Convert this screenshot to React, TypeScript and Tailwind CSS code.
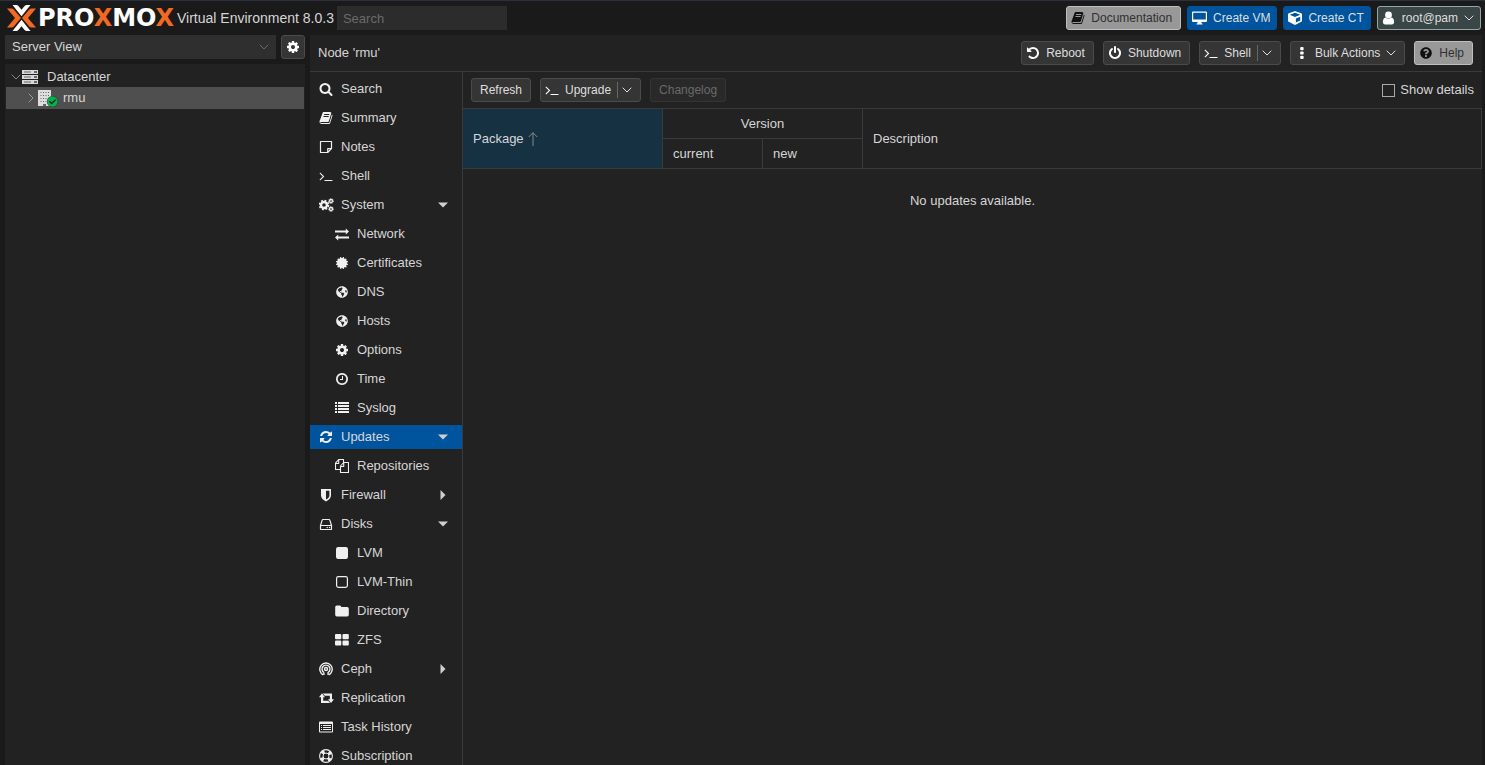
import type { ReactNode } from 'react';
import {
  FaCertificate,
  FaCheckCircle,
  FaCube,
  FaGlobeAmericas,
  FaQuestionCircle,
} from 'react-icons/fa';

const PATHS = {
  search:
    'M1216 832q0-185-131.5-316.5t-316.5-131.5-316.5 131.5-131.5 316.5 131.5 316.5 316.5 131.5 316.5-131.5 131.5-316.5zm512 832q0 52-38 90t-90 38q-54 0-90-38l-343-342q-179 124-399 124-143 0-273.5-55.5t-225-150-150-225-55.5-273.5 55.5-273.5 150-225 225-150 273.5-55.5 273.5 55.5 225 150 150 225 55.5 273.5q0 220-124 399l343 343q37 37 37 90z',
  book: 'M1703 478q40 57 18 129l-275 906q-19 64-76.5 107.5t-122.5 43.5h-923q-77 0-148.5-53.5t-99.5-131.5q-24-67-2-127 0-4 3-27t4-37q1-8-3-21.5t-3-19.5q2-11 8-21t16.5-23.5 16.5-23.5q23-38 45-91.5t30-91.5q3-10 .5-30t-.5-28q3-11 17-28t17-23q21-36 42-92t25-90q1-9-2.5-32t.5-28q4-13 22-30.5t22-22.5q19-26 42.5-84.5t27.5-96.5q1-8-3-25.5t-2-26.5q2-8 9-18t18-23 17-21q8-12 16.5-30.5t15-35 16-36 19.5-32 26.5-23.5 36-11.5 47.5 5.5l-1 3q38-9 51-9h761q74 0 114 56t18 130l-274 906q-36 119-71.5 153.5t-128.5 34.5h-869q-27 0-38 15-11 16-1 43 24 70 144 70h923q29 0 56-15.5t35-41.5l300-987q7-22 5-57 38 15 59 43zm-1064 2q-4 13 2 22.5t20 9.5h608q13 0 25.5-9.5t16.5-22.5l21-64q4-13-2-22.5t-20-9.5h-608q-13 0-25.5 9.5t-16.5 22.5zm-83 256q-4 13 2 22.5t20 9.5h608q13 0 25.5-9.5t16.5-22.5l21-64q4-13-2-22.5t-20-9.5h-608q-13 0-25.5 9.5t-16.5 22.5z',
  terminal:
    'M649 983l-466 466q-10 10-23 10t-23-10l-50-50q-10-10-10-23t10-23l393-393-393-393q-10-10-10-23t10-23l50-50q10-10 23-10t23 10l466 466q10 10 10 23t-10 23zm1079 457v64q0 14-9 23t-23 9h-960q-14 0-23-9t-9-23v-64q0-14 9-23t23-9h960q14 0 23 9t9 23z',
  refresh:
    'M1639 1056q0 5-1 7-64 268-268 434.5t-478 166.5q-146 0-282.5-55t-243.5-157l-129 129q-19 19-45 19t-45-19-19-45v-448q0-26 19-45t45-19h448q26 0 45 19t19 45-19 45l-137 137q71 66 161 102t187 36q134 0 250-65t186-179q11-17 53-117 8-23 30-23h192q13 0 22.5 9.5t9.5 22.5zm25-800v448q0 26-19 45t-45 19h-448q-26 0-45-19t-19-45 19-45l138-138q-148-137-349-137-134 0-250 65t-186 179q-11 17-53 117-8 23-30 23h-199q-13 0-22.5-9.5t-9.5-22.5v-7q65-268 270-434.5t480-166.5q146 0 284 55.5t245 156.5l130-129q19-19 45-19t45 19 19 45z',
  cog: 'M1152 896q0-106-75-181t-181-75-181 75-75 181 75 181 181 75 181-75 75-181zm512-109v222q0 12-8 23t-20 13l-185 28q-19 54-39 91 35 50 107 138 10 12 10 25t-9 23q-27 37-99 108t-94 71q-12 0-26-9l-138-108q-44 23-91 38-16 136-29 186-7 28-36 28h-222q-14 0-24.5-8.5t-11.5-21.5l-28-184q-49-16-90-37l-141 107q-10 9-25 9-14 0-25-11-126-114-165-168-7-10-7-23 0-12 8-23 15-21 51-66.5t54-70.5q-27-50-41-99l-183-27q-13-2-21-12.5t-8-23.5v-222q0-12 8-23t19-13l186-28q14-46 39-92-40-57-107-138-10-12-10-24 0-10 9-23 26-36 98.5-107.5t94.5-71.5q13 0 26 10l138 107q44-23 91-38 16-136 29-186 7-28 36-28h222q14 0 24.5 8.5t11.5 21.5l28 184q49 16 90 37l142-107q9-9 24-9 13 0 25 10 129 119 165 170 7 8 7 22 0 12-8 23-15 21-51 66.5t-54 70.5q26 50 41 98l183 28q13 2 21 12.5t8 23.5z',
  clock:
    'M1024 544v448q0 14-9 23t-23 9h-320q-14 0-23-9t-9-23v-64q0-14 9-23t23-9h224v-352q0-14 9-23t23-9h64q14 0 23 9t9 23zm416 352q0-148-73-273t-198-198-273-73-273 73-198 198-73 273 73 273 198 198 273 73 273-73 198-198 73-273zm224 0q0 209-103 385.5t-279.5 279.5-385.5 103-385.5-103-279.5-279.5-103-385.5 103-385.5 279.5-279.5 385.5-103 385.5 103 279.5 279.5 103 385.5z',
  undo: 'M1664 896q0 156-61 298t-164 245-245 164-298 61q-172 0-327-72.5t-264-204.5q-7-10-6.5-22.5t8.5-20.5l137-138q10-9 25-9 16 2 23 12 73 95 179 147t225 52q104 0 198.5-40.5t163.5-109.5 109.5-163.5 40.5-198.5-40.5-198.5-109.5-163.5-163.5-109.5-198.5-40.5q-98 0-188 35.5t-160 101.5l137 138q31 30 14 69-17 40-59 40h-448q-26 0-45-19t-19-45v-448q0-42 40-59 39-17 69 14l130 129q107-101 244.5-156.5t284.5-55.5q156 0 298 61t245 164 164 245 61 298z',
  power:
    'M1664 896q0 156-61 298t-164 245-245 164-298 61-298-61-245-164-164-245-61-298q0-182 80.5-343t226.5-270q43-32 95.5-25t83.5 50q32 42 24.5 94.5t-49.5 84.5q-98 74-151.5 181t-53.5 228q0 104 40.5 198.5t109.5 163.5 163.5 109.5 198.5 40.5 198.5-40.5 163.5-109.5 109.5-163.5 40.5-198.5q0-121-53.5-228t-151.5-181q-42-32-49.5-84.5t24.5-94.5q31-43 84-50t95 25q146 109 226.5 270t80.5 343zm-640-768v640q0 52-38 90t-90 38-90-38-38-90v-640q0-52 38-90t90-38 90 38 38 90z',
};

function Glyph({ name, className = 'size-3.5' }: { name: keyof typeof PATHS; className?: string }) {
  return (
    <svg viewBox="0 0 1792 1792" fill="currentColor" className={`shrink-0 ${className}`} aria-hidden="true">
      <path d={PATHS[name]} />
    </svg>
  );
}

function Art({ children, className = 'size-3.5' }: { children: ReactNode; className?: string }) {
  return (
    <svg viewBox="0 0 14 14" fill="currentColor" className={`shrink-0 ${className}`} aria-hidden="true">
      {children}
    </svg>
  );
}

const CogsIcon = () => (
  <svg viewBox="0 0 15 14" fill="none" stroke="currentColor" className="h-3.5 w-[15px] shrink-0" aria-hidden="true">
    <circle cx="5" cy="7" r="3" strokeWidth="2.4" />
    <circle cx="5" cy="7" r="4.6" strokeWidth="1.5" strokeDasharray="1.9 1.71" />
    <circle cx="12" cy="3" r="1.5" strokeWidth="1.3" />
    <circle cx="12" cy="3" r="2.4" strokeWidth="0.9" strokeDasharray="1 0.88" />
    <circle cx="12" cy="11" r="1.5" strokeWidth="1.3" />
    <circle cx="12" cy="11" r="2.4" strokeWidth="0.9" strokeDasharray="1 0.88" />
  </svg>
);

const NoteIcon = () => (
  <Art>
    <path
      d="M1.5 1.5h11v7.2l-3.8 3.8h-7.2zM12.5 8.7H8.7v3.8"
      fill="none"
      stroke="currentColor"
      strokeWidth="1.2"
      strokeLinejoin="round"
    />
  </Art>
);

const ExchangeIcon = () => (
  <Art>
    <path d="M0 3.5h10.8V1.5L14 4.5l-3.2 3V5.5H0zM14 11.5H3.2v2L0 10.5l3.2-3v2H14z" />
  </Art>
);

const ListIcon = () => (
  <Art>
    <path d="M0 1h2v2H0zM3 1h11v2H3zM0 4h2v2H0zM3 4h11v2H3zM0 7h2v2H0zM3 7h11v2H3zM0 10h2v2H0zM3 10h11v2H3z" />
  </Art>
);

const FilesIcon = () => (
  <Art>
    <path
      d="M5.5 10.5h-5V4.2L3.7.5h4.8v3M.5 4.5h3.2v-4M5.5 13.5V7l3.2-3.5h4.8v10zM5.5 7.5h3.2v-4"
      fill="none"
      stroke="currentColor"
      strokeWidth="1.1"
      strokeLinejoin="round"
    />
  </Art>
);

const ShieldIcon = () => (
  <Art>
    <path d="M2 1h10v6.5c0 2.6-2.2 4.5-5 6-2.8-1.5-5-3.4-5-6zM7 2.7v8.9c2-1.2 3.4-2.5 3.4-4.2V2.7z" fillRule="evenodd" />
  </Art>
);

const DiskIcon = () => (
  <Art>
    <path
      d="M1.5 8.5v3.4q0 .6.6.6h9.8q.6 0 .6-.6V8.5zM1.5 8.5l1.7-5.4q.2-.6.8-.6h6q.6 0 .8.6l1.7 5.4"
      fill="none"
      stroke="currentColor"
      strokeWidth="1.2"
    />
    <circle cx="8.2" cy="10.5" r=".7" />
    <circle cx="10.5" cy="10.5" r=".7" />
  </Art>
);

const SquareIcon = () => (
  <Art>
    <rect x="1" y="1" width="12" height="12" rx="2.2" />
  </Art>
);

const SquareOutlineIcon = () => (
  <Art>
    <rect x="1.6" y="1.6" width="10.8" height="10.8" rx="1.8" fill="none" stroke="currentColor" strokeWidth="1.2" />
  </Art>
);

const FolderIcon = () => (
  <Art>
    <path d="M1.8 1.5h3q1.5 0 1.5 1.5h5.9q1.6 0 1.6 1.6v6.2q0 1.6-1.6 1.6H1.8Q.2 12.4.2 10.8V3.1q0-1.6 1.6-1.6z" />
  </Art>
);

const TilesIcon = () => (
  <Art>
    <rect x="0" y="1" width="6.3" height="5.2" rx="1" />
    <rect x="7.5" y="1" width="6.3" height="5.2" rx="1" />
    <rect x="0" y="7.4" width="6.3" height="5.2" rx="1" />
    <rect x="7.5" y="7.4" width="6.3" height="5.2" rx="1" />
  </Art>
);

const CephIcon = () => (
  <Art>
    <g fill="none" stroke="currentColor" strokeWidth="1.4">
      <path d="M4.3 12.8a6.2 6.2 0 1 1 5.4 0" />
      <path d="M4.9 10.5a4 4 0 1 1 4.2 0V13M4.9 10.5V13" />
      <circle cx="7" cy="7" r="1.5" />
    </g>
  </Art>
);

const RetweetIcon = () => (
  <svg viewBox="0 0 15 14" fill="currentColor" className="h-3.5 w-[15px] shrink-0" aria-hidden="true">
    <path d="M3 2.3 6 6.2H4.2v3.5h5l1.9 2.2H2V6.2H0zM12 12.1 9 8.2h1.8V4.7h-5L3.9 2.5H13v5.7h2z" />
  </svg>
);

const ListAltIcon = () => (
  <Art>
    <path
      d="M1 1.5h12q1 0 1 1v9q0 1-1 1H1q-1 0-1-1v-9q0-1 1-1zM1 4v7.5h12V4zM2 5h1v1H2zM4 5h8v1H4zM2 7h1v1H2zM4 7h8v1H4zM2 9h1v1H2zM4 9h8v1H4z"
      fillRule="evenodd"
    />
  </Art>
);

const LifeRingIcon = () => (
  <Art>
    <circle cx="7" cy="7" r="6.4" fill="none" stroke="currentColor" strokeWidth="1.1" />
    <circle cx="7" cy="7" r="3" fill="none" stroke="currentColor" />
    <circle
      cx="7"
      cy="7"
      r="4.7"
      fill="none"
      stroke="currentColor"
      strokeWidth="3.2"
      strokeDasharray="3.1 4.28"
      strokeDashoffset="-2.14"
    />
  </Art>
);

const DotsIcon = () => (
  <Art>
    <rect x="5.2" y="1" width="3.4" height="3.2" rx=".9" />
    <rect x="5.2" y="5.4" width="3.4" height="3.2" rx=".9" />
    <rect x="5.2" y="9.8" width="3.4" height="3.2" rx=".9" />
  </Art>
);

const MonitorIcon = () => (
  <svg viewBox="0 0 15 14" className="h-3.5 w-[15px] shrink-0" fill="currentColor" aria-hidden="true">
    <path
      d="M1 .5h13q1 0 1 1v8.5q0 1-1 1H9.3l.3 1.3q.9.1.9.7v.5h-6V13q0-.6.9-.7l.3-1.3H1q-1 0-1-1V1.5q0-1 1-1zM1.2 1.7v6.8h12.6V1.7z"
      fillRule="evenodd"
    />
  </svg>
);

const UserIcon = () => (
  <Art>
    <circle cx="6.5" cy="4" r="3.4" />
    <path d="M3.5 6.5Q6.5 9 9.5 6.5q2.6.6 2.6 4.6 0 2.3-2 2.3H2.9q-2 0-2-2.3 0-4 2.6-4.6z" />
  </Art>
);

function Chevron({ className = '' }: { className?: string }) {
  return (
    <svg
      viewBox="0 0 10 6"
      className={`h-1.5 w-2.5 shrink-0 ${className}`}
      fill="none"
      stroke="currentColor"
      aria-hidden="true"
    >
      <path d="M.7.7 5 5 9.3.7" />
    </svg>
  );
}

const ServerIcon = () => (
  <svg viewBox="0 0 16 14" className="h-3.5 w-4 shrink-0" aria-hidden="true">
    {[0, 5, 10].map((y) => (
      <g key={y}>
        <rect y={y} width="16" height="4" fill="#d8d8d8" />
        <path d={`M2 ${y + 2}h7`} stroke="#666" />
        <rect x="12" y={y + 1} width="3" height="2" fill="#666" />
      </g>
    ))}
  </svg>
);

const NodeIcon = () => (
  <span className="relative block h-4 w-5 shrink-0">
    <svg viewBox="0 0 13 16" className="h-4 w-[13px]" aria-hidden="true">
      <rect width="13" height="16" fill="#dedede" />
      <path d="M2.5 2.5h9M2.5 5.5h9M2.5 8.5h9M2.5 11.5h9" stroke="#666" strokeDasharray="1 1.5" />
      <path d="M5 16v-2h3v2z" fill="#666" />
    </svg>
    <FaCheckCircle className="absolute top-1.5 left-[9px] size-[11px] rounded-full bg-[#222] text-[#05b04a]" />
  </span>
);

interface ToolButtonProps {
  icon?: ReactNode;
  label: string;
  tone?: 'plain' | 'blue' | 'light' | 'user' | 'disabled';
  menu?: 'split' | 'arrow';
}

const TONES = {
  plain: 'border-[#4b4b4b] bg-[#353535] text-[#dedede] pr-2',
  blue: 'border-[#00549e] bg-[#00549e] text-[#dedede] pr-1.5',
  light: 'border-[#bfbfbf] bg-[#989898] text-[#303030] pr-2',
  user: 'border-[#93a8a6] bg-[#3a4645] text-[#dedede] pr-1.5',
  disabled: 'border-[#343434] bg-[#292929] text-[#6a6a6a] pr-2',
};

function ToolButton({ icon, label, tone = 'plain', menu }: ToolButtonProps) {
  return (
    <button
      type="button"
      disabled={tone === 'disabled'}
      className={`flex h-6 items-center rounded-[3px] border text-xs whitespace-nowrap ${icon ? 'pl-1' : 'pl-2'} ${TONES[tone]}`}
    >
      {icon && <span className={`mr-1.5 flex ${tone === 'light' ? 'text-[#111]' : 'text-white'}`}>{icon}</span>}
      {label}
      {menu === 'split' && <span className="ml-1.5 h-4 w-px bg-[#666]" />}
      {menu && <Chevron className={menu === 'split' ? 'ml-1' : 'ml-1.5'} />}
    </button>
  );
}

interface NavItem {
  label: string;
  icon: ReactNode;
  child?: boolean;
  arrow?: 'down' | 'right';
}

const NAV: NavItem[] = [
  { label: 'Search', icon: <Glyph name="search" /> },
  { label: 'Summary', icon: <Glyph name="book" /> },
  { label: 'Notes', icon: <NoteIcon /> },
  { label: 'Shell', icon: <Glyph name="terminal" /> },
  { label: 'System', icon: <CogsIcon />, arrow: 'down' },
  { label: 'Network', icon: <ExchangeIcon />, child: true },
  { label: 'Certificates', icon: <FaCertificate className="size-3" />, child: true },
  { label: 'DNS', icon: <FaGlobeAmericas className="size-3" />, child: true },
  { label: 'Hosts', icon: <FaGlobeAmericas className="size-3" />, child: true },
  { label: 'Options', icon: <Glyph name="cog" />, child: true },
  { label: 'Time', icon: <Glyph name="clock" />, child: true },
  { label: 'Syslog', icon: <ListIcon />, child: true },
  { label: 'Updates', icon: <Glyph name="refresh" />, arrow: 'down' },
  { label: 'Repositories', icon: <FilesIcon />, child: true },
  { label: 'Firewall', icon: <ShieldIcon />, arrow: 'right' },
  { label: 'Disks', icon: <DiskIcon />, arrow: 'down' },
  { label: 'LVM', icon: <SquareIcon />, child: true },
  { label: 'LVM-Thin', icon: <SquareOutlineIcon />, child: true },
  { label: 'Directory', icon: <FolderIcon />, child: true },
  { label: 'ZFS', icon: <TilesIcon />, child: true },
  { label: 'Ceph', icon: <CephIcon />, arrow: 'right' },
  { label: 'Replication', icon: <RetweetIcon /> },
  { label: 'Task History', icon: <ListAltIcon /> },
  { label: 'Subscription', icon: <LifeRingIcon /> },
];

function NavTree() {
  return (
    <nav className="flex w-[153px] shrink-0 flex-col gap-[5px] overflow-hidden border-r border-[#3a3a3a] pt-[5px]">
      {NAV.map((item) => (
        <a
          key={item.label}
          href="#"
          className={`flex h-6 shrink-0 items-center pr-3.5 ${item.child ? 'pl-6' : 'pl-2'} ${
            item.label === 'Updates' ? 'bg-[#00549e]' : ''
          }`}
        >
          <span className="mr-[7px] flex w-4 justify-center text-[#f0f0f0]">{item.icon}</span>
          <span className="flex-1">{item.label}</span>
          {item.arrow && (
            <svg viewBox="0 0 10 10" className="size-2.5" fill="#d0d0d0" aria-hidden="true">
              <path d={item.arrow === 'down' ? 'M0 2.5h10l-5 5z' : 'M2.5 0v10l5-5z'} />
            </svg>
          )}
        </a>
      ))}
    </nav>
  );
}

function Logo() {
  return (
    <div className="flex items-center">
      <svg viewBox="0 0 29 26" className="h-[26px] w-[29px]" aria-hidden="true">
        <path d="M0 3.5h4.5q1.5 0 2.5 1.2L14 13l-7 8.3q-1 1.2-2.5 1.2H0L8 13z" fill="#f26a21" />
        <path d="M29 3.5h-4.5q-1.5 0-2.5 1.2L15 13l7 8.3q1 1.2 2.5 1.2H29L21 13z" fill="#f26a21" />
        <path d="M5.5 0h3.7q1.3 0 2.2 1l3.1 3.7L17.6 1q.9-1 2.2-1h3.7l-9 11.2z" fill="#fff" />
        <path d="M5.5 26h3.7q1.3 0 2.2-1l3.1-3.7 3.1 3.7q.9 1 2.2 1h3.7l-9-11.2z" fill="#fff" />
      </svg>
      <span className="ml-0.5 w-[137px] font-['DejaVu_Sans',sans-serif] text-2xl leading-6 font-bold text-white">
        PRO<span className="text-[#f26a21]">X</span>MO<span className="text-[#f26a21]">X</span>
      </span>
    </div>
  );
}

function TopBar() {
  return (
    <header className="flex h-[35px] shrink-0 items-center border-t border-[#2b3040] pr-1 pl-[7px]">
      <Logo />
      <span className="ml-0.5 text-sm whitespace-nowrap">Virtual Environment 8.0.3</span>
      <input
        type="search"
        aria-label="Search"
        placeholder="Search"
        className="ml-[3px] h-6 w-[170px] bg-[#2c2c2c] px-1.5 placeholder:text-[#6a6a6a]"
      />
      <div className="ml-auto flex gap-1.5">
        <ToolButton tone="light" icon={<Glyph name="book" />} label="Documentation" />
        <ToolButton tone="blue" icon={<MonitorIcon />} label="Create VM" />
        <ToolButton tone="blue" icon={<FaCube className="size-3.5" />} label="Create CT" />
        <ToolButton tone="user" icon={<UserIcon />} label="root@pam" menu="arrow" />
      </div>
    </header>
  );
}

function ResourceTree() {
  return (
    <aside className="flex w-[300px] shrink-0 flex-col">
      <div className="flex h-6 gap-[5px]">
        <div className="relative flex flex-1 items-center">
          <select aria-label="View" className="size-full appearance-none bg-[#2f2f2f] px-[7px]">
            <option>Server View</option>
          </select>
          <Chevron className="pointer-events-none absolute right-[7px] text-[#666]" />
        </div>
        <button
          type="button"
          aria-label="Settings"
          className="flex size-6 items-center justify-center rounded-[3px] border border-[#4b4b4b] bg-[#353535] text-white"
        >
          <Glyph name="cog" />
        </button>
      </div>
      <ul className="mt-[5px] flex-1 bg-[#222] px-px py-0.5">
        <li className="flex h-[21px] items-center pl-[5px]">
          <Chevron className="text-[#888]" />
          <span className="ml-px flex w-[25px]">
            <ServerIcon />
          </span>
          Datacenter
        </li>
        <li className="flex h-[22px] items-center bg-[#4f4f4f] pl-5">
          <Chevron className="-rotate-90 text-[#999]" />
          <span className="ml-0.5 flex w-[25px]">
            <NodeIcon />
          </span>
          rmu
        </li>
      </ul>
    </aside>
  );
}

function UpdatesPanel() {
  return (
    <section className="flex min-w-0 flex-1 flex-col">
      <div className="flex h-9 items-center gap-[9px] px-2">
        <ToolButton label="Refresh" />
        <ToolButton icon={<Glyph name="terminal" />} label="Upgrade" menu="split" />
        <ToolButton tone="disabled" label="Changelog" />
        <label className="ml-auto flex items-center gap-[5px]">
          <input type="checkbox" className="size-[13px] appearance-none border border-[#aaa]" />
          Show details
        </label>
      </div>
      <table className="w-full table-fixed border-separate border-spacing-0 text-left">
        <colgroup>
          <col className="w-[200px]" />
          <col className="w-[100px]" />
          <col className="w-[100px]" />
          <col />
        </colgroup>
        <thead>
          <tr className="h-[31px]">
            <th rowSpan={2} className="border-y border-r border-[#3a3a3a] bg-[#153142] px-2.5 font-normal">
              <span className="flex items-center gap-1">
                Package
                <svg viewBox="0 0 10 14" className="h-3.5 w-2.5" fill="none" stroke="#8a8a8a" aria-hidden="true">
                  <path d="M5 14V.7M.7 5 5 .7 9.3 5" />
                </svg>
              </span>
            </th>
            <th colSpan={2} className="border-y border-r border-[#3a3a3a] text-center font-normal">
              Version
            </th>
            <th rowSpan={2} className="border-y border-r border-[#3a3a3a] px-2.5 font-normal">
              Description
            </th>
          </tr>
          <tr className="h-[30px]">
            <th className="border-r border-b border-[#3a3a3a] px-2.5 font-normal">current</th>
            <th className="border-r border-b border-[#3a3a3a] px-2.5 font-normal">new</th>
          </tr>
        </thead>
        <tbody>
          <tr>
            <td colSpan={4} className="py-[22px] text-center">
              No updates available.
            </td>
          </tr>
        </tbody>
      </table>
    </section>
  );
}

export default function App() {
  return (
    <div className="flex h-screen flex-col overflow-hidden bg-[#1a1a1a] font-['Liberation_Sans',Arial,sans-serif] text-[13px] leading-5 text-[#d6d6d6]">
      <TopBar />
      <div className="flex min-h-0 flex-1 gap-[5px] pr-[3px] pl-[5px]">
        <ResourceTree />
        <main className="flex min-w-0 flex-1 flex-col bg-[#222]">
          <div className="flex h-[37px] shrink-0 items-center gap-[9px] border-b border-[#3a3a3a] pr-[9px] pl-2">
            <h1 className="mr-auto">Node 'rmu'</h1>
            <ToolButton icon={<Glyph name="undo" />} label="Reboot" />
            <ToolButton icon={<Glyph name="power" />} label="Shutdown" />
            <ToolButton icon={<Glyph name="terminal" />} label="Shell" menu="split" />
            <ToolButton icon={<DotsIcon />} label="Bulk Actions" menu="arrow" />
            <ToolButton tone="light" icon={<FaQuestionCircle className="mx-px size-3" />} label="Help" />
          </div>
          <div className="flex min-h-0 flex-1">
            <NavTree />
            <UpdatesPanel />
          </div>
        </main>
      </div>
    </div>
  );
}
